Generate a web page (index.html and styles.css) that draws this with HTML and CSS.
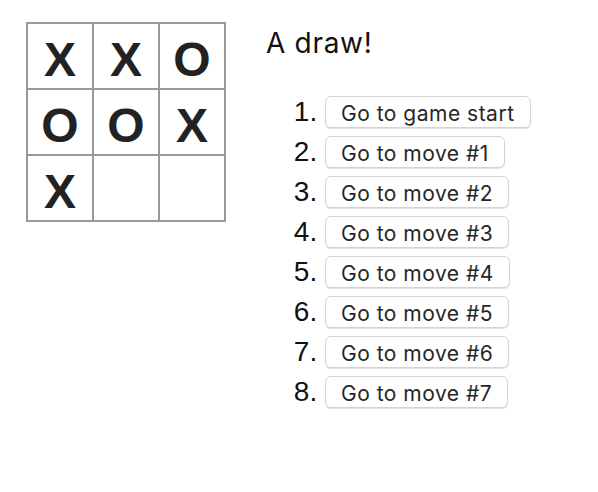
FILE: index.html
```html
<!DOCTYPE html>
<html>
<head>
<meta charset="utf-8">
<title>Tic-Tac-Toe</title>
<link rel="stylesheet" href="styles.css">
</head>
<body>
<div class="game">
  <div class="board">
    <button class="square">X</button>
    <button class="square">X</button>
    <button class="square">O</button>
    <button class="square">O</button>
    <button class="square">O</button>
    <button class="square">X</button>
    <button class="square">X</button>
    <button class="square"></button>
    <button class="square"></button>
  </div>
  <div class="game-info">
    <div class="status">A draw!</div>
    <ol class="moves">
      <li><button class="move">Go to game start</button></li>
      <li><button class="move">Go to move #1</button></li>
      <li><button class="move">Go to move #2</button></li>
      <li><button class="move">Go to move #3</button></li>
      <li><button class="move">Go to move #4</button></li>
      <li><button class="move">Go to move #5</button></li>
      <li><button class="move">Go to move #6</button></li>
      <li><button class="move">Go to move #7</button></li>
    </ol>
  </div>
</div>
</body>
</html>
```
FILE: styles.css
```css
* {
  box-sizing: border-box;
}

body {
  margin: 0;
  background: #fff;
  color: #000;
  font-family: "Liberation Sans", Arial, sans-serif;
}

.game {
  display: flex;
  align-items: flex-start;
  padding: 22px 0 0 26px;
}

.board {
  display: grid;
  grid-template-columns: repeat(3, 66px);
  grid-auto-rows: 66px;
  border-top: 2px solid #999;
  border-left: 2px solid #999;
}

.square {
  margin: 0;
  padding: 0;
  background: #fff;
  border: none;
  border-right: 2px solid #999;
  border-bottom: 2px solid #999;
  font-family: "Liberation Sans", Arial, sans-serif;
  font-size: 48px;
  font-weight: bold;
  line-height: 68px;
  color: #222;
  text-align: center;
  padding-top: 2px;
}

.game-info {
  margin-left: 40px;
}

.status {
  font-family: Inter, "Liberation Sans", sans-serif;
  font-size: 28px;
  line-height: 42px;
  letter-spacing: 0.7px;
  color: #111;
}

.moves {
  margin: 28px 0 0;
  padding-left: 59px;
  font-size: 28px;
  line-height: 40px;
  color: #111;
}

.move {
  height: 32px;
  margin: 0;
  padding: 4px 15px 0;
  border: 1px solid #d4d4d4;
  border-radius: 6px;
  background: #fff;
  box-shadow: 0 1px 1px rgba(0, 0, 0, 0.12);
  font-family: Inter, "Liberation Sans", sans-serif;
  font-size: 21px;
  line-height: 26px;
  letter-spacing: 0.5px;
  color: #262626;
  vertical-align: baseline;
}
```
